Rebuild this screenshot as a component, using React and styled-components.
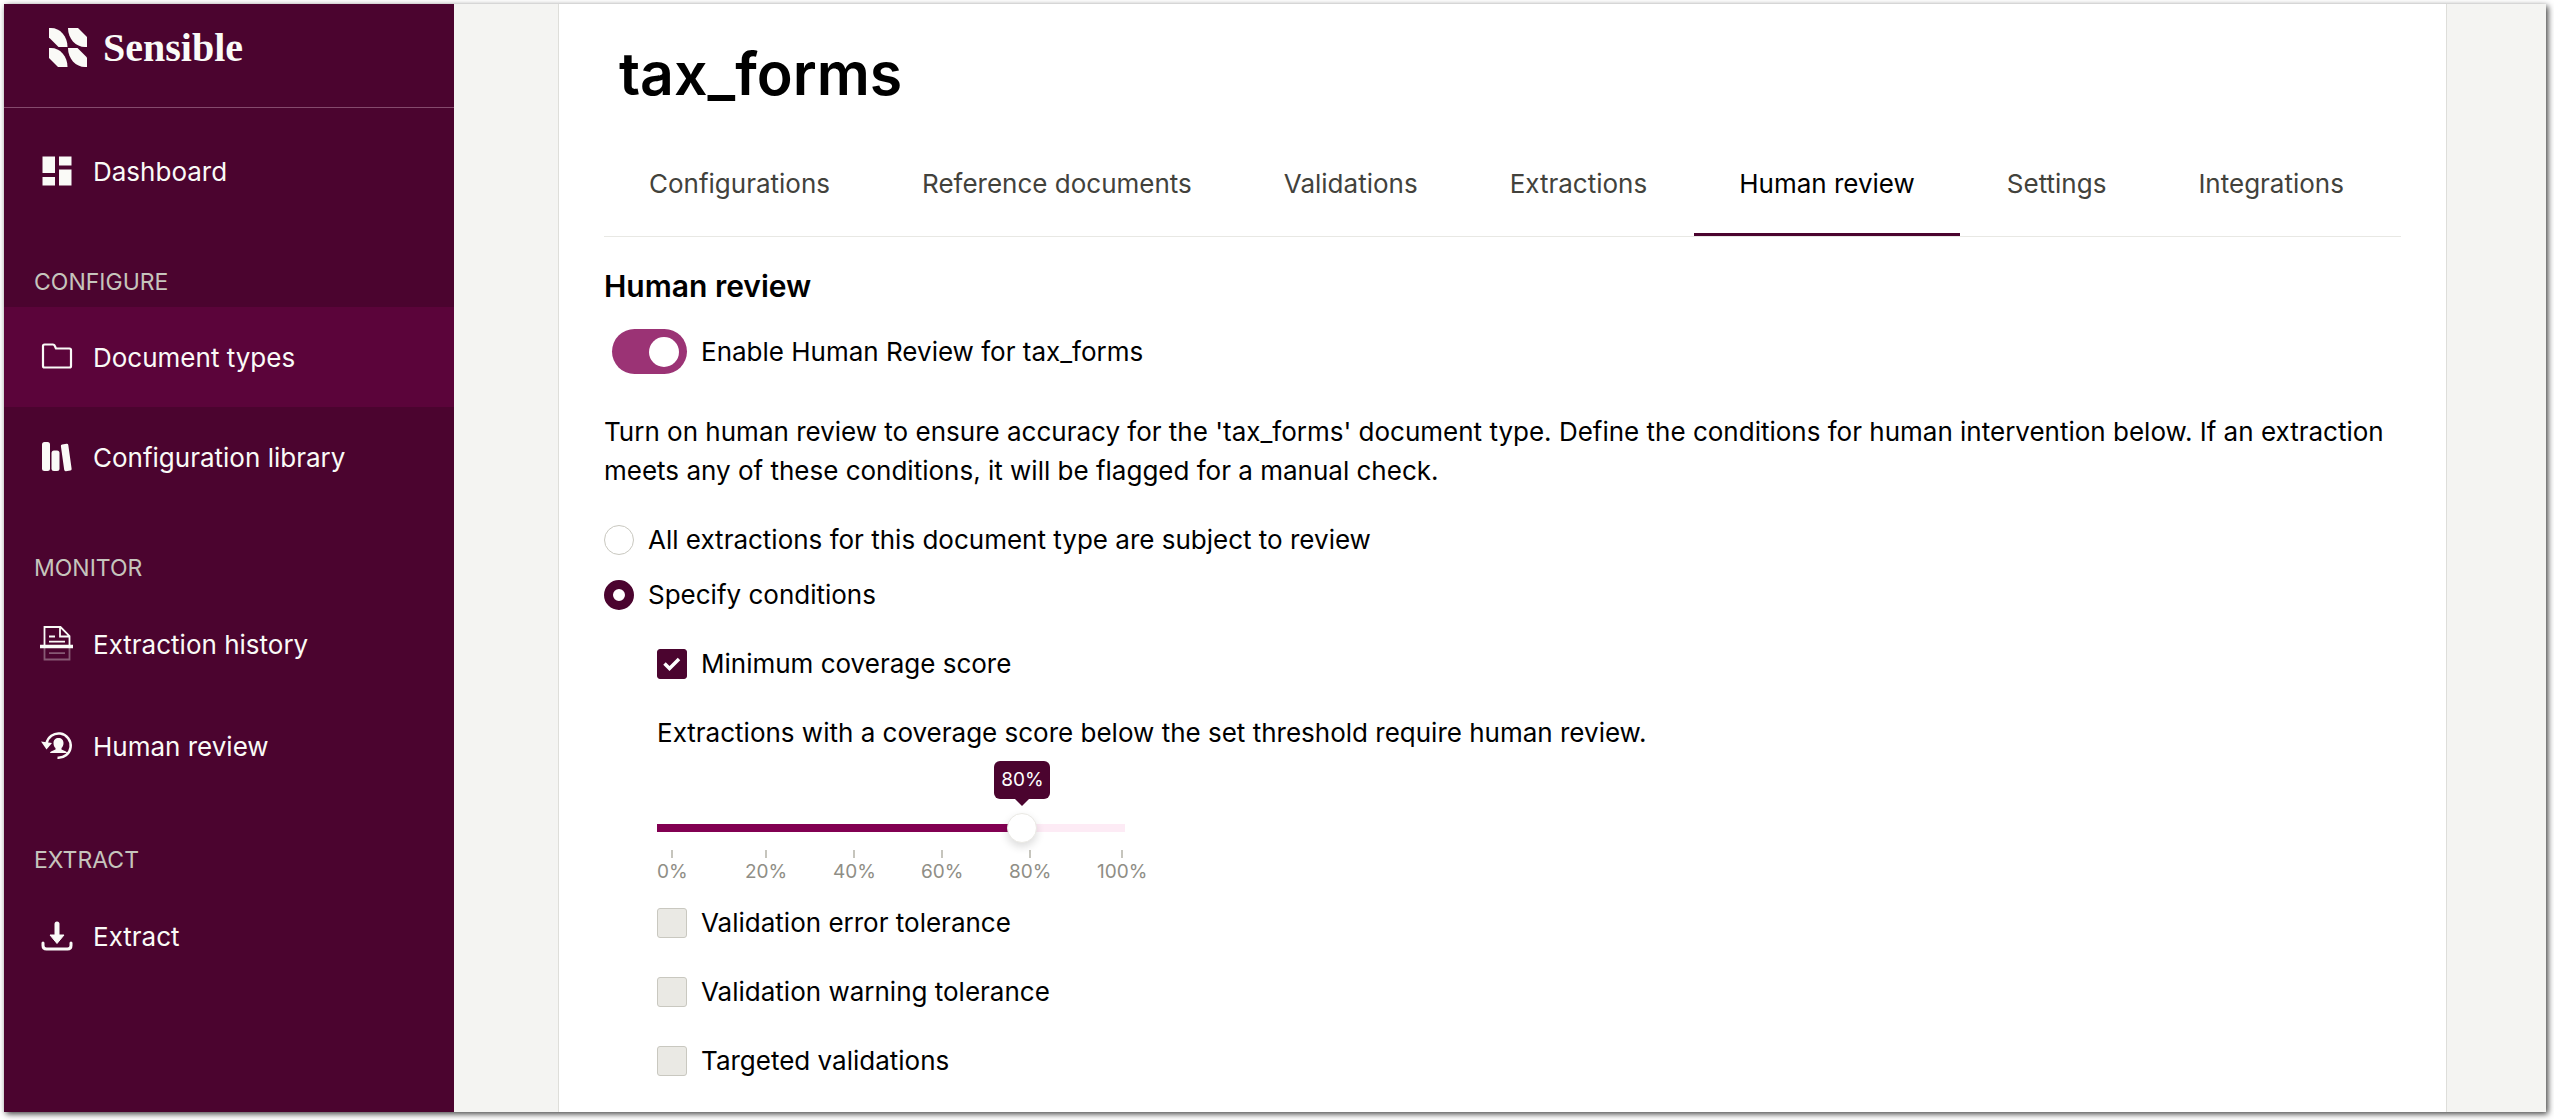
import React, { useState } from "react";
import styled, { createGlobalStyle, css } from "styled-components";

const color = {
  plum: "#4b042f",
  plumActive: "#5b043a",
  magenta: "#820052",
  toggle: "#9b3375",
  pink: "#fdebf5",
  cream: "#fafaf7",
  sand: "#f4f4f2",
  line: "#e8e8e4",
  edge: "#dededa",
  muted: "#c6c5bd",
  ink: "#000000",
};

const GlobalStyle = createGlobalStyle`
  *, *::before, *::after { box-sizing: border-box; }
  body {
    margin: 0;
    background: #ffffff;
    color: ${color.ink};
    font-family: Inter, "Liberation Sans", sans-serif;
    font-size: 26px;
    line-height: 39px;
  }
  h1, h2, p { margin: 0; }
`;

const Window = styled.div`
  display: flex;
  min-height: calc(100vh - 12px);
  margin: 4px 8px 8px 4px;
  background: ${color.sand};
  box-shadow: 2px 2px 6px rgba(0, 0, 0, 0.75);
`;

const Sidebar = styled.aside`
  flex: 0 0 450px;
  background: ${color.plum};
  color: ${color.cream};
`;

const Brand = styled.a`
  display: flex;
  align-items: center;
  gap: 16px;
  height: 104px;
  padding: 0 45px 16px;
  border-bottom: 1px solid #854a6d;
  color: inherit;
  font-family: "Liberation Serif", serif;
  font-size: 40px;
  font-weight: 700;
  text-decoration: none;
`;

const Nav = styled.nav`
  display: flex;
  flex-direction: column;
  padding-top: 13px;
`;

const Section = styled.section`
  display: flex;
  flex-direction: column;
  padding-bottom: ${(p) => (p.$roomy ? "2px" : "0")};
`;

const SectionLabel = styled.h2`
  padding: 43px 30px 7px;
  color: ${color.muted};
  font-size: 23px;
  font-weight: 400;
  line-height: 36px;
`;

const NavLink = styled.a`
  display: flex;
  align-items: center;
  gap: 15px;
  height: ${(p) => (p.$roomy ? "102px" : "100px")};
  padding: 0 32px;
  background: ${(p) => (p.$active ? color.plumActive : "transparent")};
  color: inherit;
  text-decoration: none;

  svg { flex: none; }
`;

const Main = styled.main`
  display: flex;
  flex: 1;
  min-width: 0;
  padding: 0 99px 0 104px;
`;

const Card = styled.div`
  flex: 1;
  min-width: 0;
  padding: 34px 45px 32px;
  background: #ffffff;
  border: solid ${color.edge};
  border-width: 0 1px;
`;

const Title = styled.h1`
  margin-bottom: 24px;
  padding-left: 15px;
  font-size: 59px;
  font-weight: 600;
  line-height: 72px;
`;

const Tabs = styled.nav`
  display: flex;
  gap: 2px;
  border-bottom: 1px solid ${color.line};
`;

const Tab = styled.a`
  padding: 30px 45px;
  border-bottom: 3px solid ${(p) => (p.$active ? color.plum : "transparent")};
  color: ${(p) => (p.$active ? color.ink : "#42423c")};
  text-decoration: none;
  white-space: nowrap;
`;

const Heading = styled.h2`
  margin-top: 29px;
  font-size: 30px;
  font-weight: 600;
  line-height: 40px;
`;

const SwitchRow = styled.label`
  display: flex;
  align-items: center;
  gap: 14px;
  margin-top: 23px;
  padding-left: 8px;
`;

const Switch = styled.input`
  appearance: none;
  display: flex;
  align-items: center;
  width: 75px;
  height: 45px;
  margin: 0;
  padding: 0 8px;
  border-radius: 23px;
  background: #c6c5bd;

  &::before {
    content: "";
    width: 30px;
    height: 30px;
    border-radius: 50%;
    background: #ffffff;
  }

  &:checked {
    justify-content: flex-end;
    background: ${color.toggle};
  }
`;

const Intro = styled.p`
  margin-top: 38px;
`;

const Choices = styled.div`
  display: flex;
  flex-direction: column;
  gap: 16px;
  margin-top: 30px;
`;

const Choice = styled.label`
  display: flex;
  align-items: center;
  gap: 14px;
`;

const Radio = styled.input`
  appearance: none;
  width: 30px;
  height: 30px;
  margin: 0;
  border: 1px solid #c9c8c0;
  border-radius: 50%;
  background: #ffffff;

  &:checked { border: 9px solid ${color.plum}; }
`;

const Conditions = styled.div`
  display: flex;
  flex-direction: column;
  gap: 30px;
  margin-top: 30px;
  padding-left: 53px;
`;

const CheckShell = styled.span`
  display: grid;
  place-items: center;

  > * { grid-area: 1 / 1; }
  > svg { pointer-events: none; }
`;

const CheckInput = styled.input`
  appearance: none;
  width: 30px;
  height: 30px;
  margin: 0;
  border: 1px solid #c9c8c0;
  border-radius: 3px;
  background: #eae9e4;

  &:checked {
    border-color: ${color.plum};
    background: ${color.plum};
  }
`;

const Threshold = styled.div`
  margin: 31px 0 -13px;
`;

const SliderBox = styled.div`
  position: relative;
  display: flex;
  width: 468px;
`;

const thumb = css`
  width: 30px;
  height: 30px;
  border: 1px solid #eae9e4;
  border-radius: 50%;
  background: #ffffff;
  box-shadow: 0 4px 8px rgba(0, 0, 0, 0.14);
`;

const Slider = styled.input`
  appearance: none;
  width: 100%;
  height: 30px;
  margin: 0;
  background: linear-gradient(
      to right,
      ${color.magenta} var(--value),
      ${color.pink} var(--value)
    )
    center / 100% 8px no-repeat;

  &::-webkit-slider-thumb { appearance: none; ${thumb} }
  &::-moz-range-thumb { ${thumb} }
`;

const Bubble = styled.output`
  position: absolute;
  bottom: 44px;
  left: calc(15px + (100% - 30px) * var(--ratio));
  width: 56px;
  border-radius: 6px;
  background: ${color.plum};
  color: #ffffff;
  font-size: 19px;
  line-height: 38px;
  text-align: center;
  transform: translateX(-50%);

  &::after {
    content: "";
    position: absolute;
    top: 100%;
    left: 50%;
    border: 7px solid transparent;
    border-top-color: ${color.plum};
    border-bottom: 0;
    transform: translateX(-50%);
  }
`;

const Scale = styled.div`
  display: grid;
  grid-template-columns: repeat(5, 88px) auto;
  justify-content: start;
  justify-items: start;
  margin-top: 7px;
  color: #8f8e86;
  font-size: 19px;
  line-height: 28px;
`;

const Mark = styled.span`
  display: flex;
  flex-direction: column;
  align-items: center;

  &::before {
    content: "";
    width: 2px;
    height: 8px;
    background: #c6c5bd;
  }
`;

function LogoMark() {
  return (
    <svg width="38" height="39" viewBox="0 0 38 39" fill="currentColor" aria-hidden="true">
      <path d="M0 0h2C11 0 18.500 8 18.500 19H9.500L0 9.500z" />
      <path d="M19 0h10l9 9v10h-2C27 19 19 11 19 0z" />
      <path d="M0 20h2c9 0 16.500 8 16.500 19H9L0 30z" />
      <path d="M19 20h9.500l9.500 9.500V39h-2c-9 0-17-8-17-19z" />
    </svg>
  );
}

function DashboardIcon() {
  return (
    <svg width="42" height="42" viewBox="0 0 42 42" fill="currentColor" aria-hidden="true">
      <path d="M6.500 6.500h12.500v16.500H6.500zM23 6.500h12.500v9H23zM6.500 27h12.500v8.500H6.500zM23 19.500h12.500v16H23z" />
    </svg>
  );
}

function FolderIcon() {
  return (
    <svg width="42" height="42" viewBox="0 0 42 42" fill="none" stroke="currentColor" strokeWidth="2.200" strokeLinejoin="round" aria-hidden="true">
      <path d="M8.500 8.500h8.500q1.200 0 1.600 1l1.400 3h13.500q1.500 0 1.500 1.500V30q0 1.500-1.500 1.500h-25Q7 31.500 7 30V10Q7 8.500 8.500 8.500z" />
    </svg>
  );
}

function BooksIcon() {
  return (
    <svg width="42" height="42" viewBox="0 0 42 42" fill="currentColor" aria-hidden="true">
      <rect x="6" y="6" width="8" height="29" rx="2.500" />
      <rect x="15.500" y="14.500" width="8" height="20.500" rx="2.500" />
      <rect x="26.500" y="8" width="7.500" height="27" rx="1.500" transform="rotate(-8 30 21.500)" />
    </svg>
  );
}

function ScanIcon() {
  return (
    <svg width="42" height="42" viewBox="0 0 42 42" fill="none" stroke="currentColor" strokeWidth="1.800" aria-hidden="true">
      <path d="M8.500 22V4h16L33.500 13v9M24 4v9.500h9.500M13 13.500h6M13 18.700h16" />
      <path d="M4 23.500h33" strokeWidth="3.500" />
      <path d="M8.500 25v11.500h25V25M13 30.200h16" opacity="0.350" />
    </svg>
  );
}

function ReviewIcon() {
  return (
    <svg width="42" height="42" viewBox="0 0 42 42" aria-hidden="true">
      <path d="M10.500 18.500A12.200 12.200 0 1 1 21.500 32.800" fill="none" stroke="currentColor" strokeWidth="2.500" />
      <path d="M5 16.500l11 1.500-5.500 6.500z" fill="currentColor" />
      <path d="M22.500 13c3 0 5 2 5 5 0 2.500-1 4-2 5v1.500l4.500 2q1 .5 1 1.500H14q0-1 1-1.500l4.500-2v-1.500c-1.200-1-2-2.500-2-5 0-3 2-5 5-5z" fill="currentColor" />
    </svg>
  );
}

function DownloadIcon() {
  return (
    <svg width="42" height="42" viewBox="0 0 42 42" aria-hidden="true">
      <path d="M7 28v2.500q0 3.500 3.500 3.500h21q3.500 0 3.500-3.500V28" fill="none" stroke="currentColor" strokeWidth="3" strokeLinecap="round" />
      <path d="M14 20h14l-7 8.500z" fill="currentColor" stroke="currentColor" strokeLinejoin="round" />
      <path d="M21 9v12" stroke="currentColor" strokeWidth="5" strokeLinecap="round" />
    </svg>
  );
}

function Tick() {
  return (
    <svg width="18" height="14" viewBox="0 0 18 14" fill="none" stroke="#ffffff" strokeWidth="3.500" aria-hidden="true">
      <path d="M1.500 6.500l5 5L16 2" />
    </svg>
  );
}

const sections = [
  {
    label: "CONFIGURE",
    items: [
      { text: "Document types", Icon: FolderIcon, active: true },
      { text: "Configuration library", Icon: BooksIcon },
    ],
  },
  {
    label: "MONITOR",
    roomy: true,
    items: [
      { text: "Extraction history", Icon: ScanIcon },
      { text: "Human review", Icon: ReviewIcon },
    ],
  },
  {
    label: "EXTRACT",
    roomy: true,
    items: [{ text: "Extract", Icon: DownloadIcon }],
  },
];

const tabs = [
  "Configurations",
  "Reference documents",
  "Validations",
  "Extractions",
  "Human review",
  "Settings",
  "Integrations",
];

const marks = ["0%", "20%", "40%", "60%", "80%", "100%"];

function Checkbox({ label, checked, onChange }) {
  return (
    <Choice>
      <CheckShell>
        <CheckInput type="checkbox" checked={checked} onChange={(e) => onChange(e.target.checked)} />
        {checked && <Tick />}
      </CheckShell>
      {label}
    </Choice>
  );
}

export default function App() {
  const [enabled, setEnabled] = useState(true);
  const [mode, setMode] = useState("conditions");
  const [score, setScore] = useState(80);
  const [rules, setRules] = useState({ coverage: true, error: false, warning: false, targeted: false });
  const setRule = (name) => (value) => setRules((r) => ({ ...r, [name]: value }));

  return (
    <>
      <GlobalStyle />
      <Window>
        <Sidebar>
          <Brand href="#">
            <LogoMark />
            Sensible
          </Brand>
          <Nav aria-label="Primary">
            <NavLink href="#dashboard">
              <DashboardIcon />
              Dashboard
            </NavLink>
            {sections.map(({ label, roomy, items }) => (
              <Section key={label} $roomy={roomy}>
                <SectionLabel>{label}</SectionLabel>
                {items.map(({ text, Icon, active }) => (
                  <NavLink key={text} href="#nav" $active={active} $roomy={roomy}>
                    <Icon />
                    {text}
                  </NavLink>
                ))}
              </Section>
            ))}
          </Nav>
        </Sidebar>
        <Main>
          <Card>
            <Title>tax_forms</Title>
            <Tabs aria-label="Document type">
              {tabs.map((t) => (
                <Tab key={t} href="#tab" $active={t === "Human review"}>
                  {t}
                </Tab>
              ))}
            </Tabs>
            <Heading>Human review</Heading>
            <SwitchRow>
              <Switch type="checkbox" role="switch" checked={enabled} onChange={(e) => setEnabled(e.target.checked)} />
              Enable Human Review for tax_forms
            </SwitchRow>
            <Intro>
              Turn on human review to ensure accuracy for the 'tax_forms' document type. Define the conditions for
              human intervention below. If an extraction meets any of these conditions, it will be flagged for a manual
              check.
            </Intro>
            <Choices>
              <Choice>
                <Radio type="radio" name="mode" checked={mode === "all"} onChange={() => setMode("all")} />
                All extractions for this document type are subject to review
              </Choice>
              <Choice>
                <Radio type="radio" name="mode" checked={mode === "conditions"} onChange={() => setMode("conditions")} />
                Specify conditions
              </Choice>
            </Choices>
            <Conditions>
              <Checkbox label="Minimum coverage score" checked={rules.coverage} onChange={setRule("coverage")} />
              <p>Extractions with a coverage score below the set threshold require human review.</p>
              <Threshold>
                <SliderBox style={{ "--value": `${score}%`, "--ratio": score / 100 }}>
                  <Slider
                    type="range"
                    min="0"
                    max="100"
                    value={score}
                    aria-label="Minimum coverage score threshold"
                    onChange={(e) => setScore(Number(e.target.value))}
                  />
                  <Bubble>{score}%</Bubble>
                </SliderBox>
                <Scale>
                  {marks.map((m) => (
                    <Mark key={m}>{m}</Mark>
                  ))}
                </Scale>
              </Threshold>
              <Checkbox label="Validation error tolerance" checked={rules.error} onChange={setRule("error")} />
              <Checkbox label="Validation warning tolerance" checked={rules.warning} onChange={setRule("warning")} />
              <Checkbox label="Targeted validations" checked={rules.targeted} onChange={setRule("targeted")} />
            </Conditions>
          </Card>
        </Main>
      </Window>
    </>
  );
}
